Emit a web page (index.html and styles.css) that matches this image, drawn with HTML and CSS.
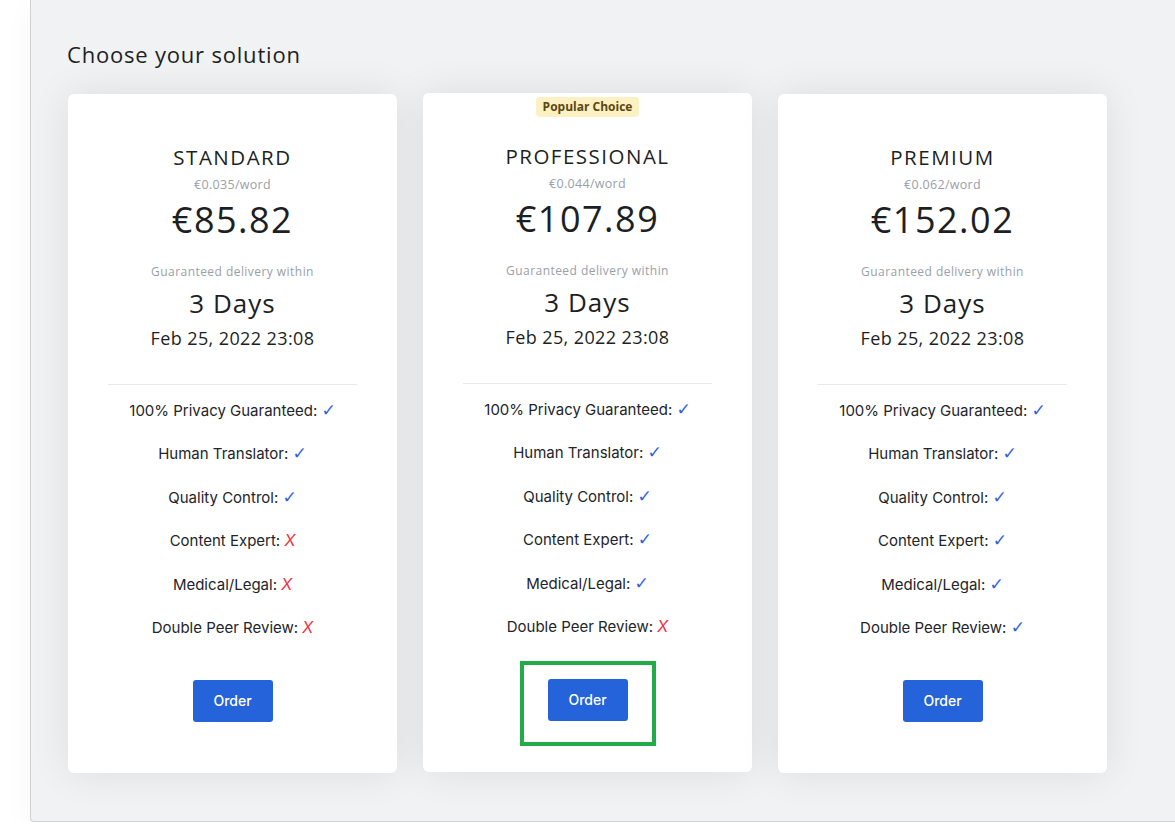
FILE: index.html
```html
<!DOCTYPE html>
<html lang="en">
<head>
    <meta charset="UTF-8">
    <meta name="viewport" content="width=device-width, initial-scale=1.0">
    <title>Choose your solution</title>
    <link rel="stylesheet" href="styles.css">
</head>
<body>
    <div class="panel">
        <h2 class="panel-title">Choose your solution</h2>

        <div class="plans">
            <!-- Standard -->
            <div class="plan">
                <h3 class="plan-name">STANDARD</h3>
                <p class="per-word">€0.035/word</p>
                <p class="price">€85.82</p>
                <p class="delivery-label">Guaranteed delivery within</p>
                <p class="days">3 Days</p>
                <p class="date">Feb 25, 2022 23:08</p>
                <ul class="features">
                    <li>100% Privacy Guaranteed: <span class="yes">✓</span></li>
                    <li>Human Translator: <span class="yes">✓</span></li>
                    <li>Quality Control: <span class="yes">✓</span></li>
                    <li>Content Expert: <span class="no">X</span></li>
                    <li>Medical/Legal: <span class="no">X</span></li>
                    <li>Double Peer Review: <span class="no">X</span></li>
                </ul>
                <button type="button" class="order-btn">Order</button>
            </div>

            <!-- Professional -->
            <div class="plan popular">
                <span class="badge">Popular Choice</span>
                <h3 class="plan-name">PROFESSIONAL</h3>
                <p class="per-word">€0.044/word</p>
                <p class="price">€107.89</p>
                <p class="delivery-label">Guaranteed delivery within</p>
                <p class="days">3 Days</p>
                <p class="date">Feb 25, 2022 23:08</p>
                <ul class="features">
                    <li>100% Privacy Guaranteed: <span class="yes">✓</span></li>
                    <li>Human Translator: <span class="yes">✓</span></li>
                    <li>Quality Control: <span class="yes">✓</span></li>
                    <li>Content Expert: <span class="yes">✓</span></li>
                    <li>Medical/Legal: <span class="yes">✓</span></li>
                    <li>Double Peer Review: <span class="no">X</span></li>
                </ul>
                <button type="button" class="order-btn highlighted">Order</button>
            </div>

            <!-- Premium -->
            <div class="plan">
                <h3 class="plan-name">PREMIUM</h3>
                <p class="per-word">€0.062/word</p>
                <p class="price">€152.02</p>
                <p class="delivery-label">Guaranteed delivery within</p>
                <p class="days">3 Days</p>
                <p class="date">Feb 25, 2022 23:08</p>
                <ul class="features">
                    <li>100% Privacy Guaranteed: <span class="yes">✓</span></li>
                    <li>Human Translator: <span class="yes">✓</span></li>
                    <li>Quality Control: <span class="yes">✓</span></li>
                    <li>Content Expert: <span class="yes">✓</span></li>
                    <li>Medical/Legal: <span class="yes">✓</span></li>
                    <li>Double Peer Review: <span class="yes">✓</span></li>
                </ul>
                <button type="button" class="order-btn">Order</button>
            </div>
        </div>
    </div>
</body>
</html>
```

FILE: styles.css
```css
body {
    margin: 0;
    background: #ffffff;
    font-family: 'Inter', sans-serif;
    color: #1f2328;
}
.panel {
    margin-left: 30px;
    width: 1113px;
    padding: 39px 37px 48px 36px;
    background: #f1f2f4;
    border: 1px solid #cfd1d4;
    border-top: none;
    border-radius: 0 0 4px 4px;
    box-shadow: 0 6px 30px rgba(0, 0, 0, 0.04);
}
.panel-title {
    margin: 0 0 25px;
    font-family: 'Open Sans', sans-serif;
    font-weight: 400;
    font-size: 22px;
    line-height: 30px;
    letter-spacing: 0.8px;
    color: #1d1f23;
}
.plans {
    display: flex;
    gap: 26px;
    padding-left: 1px;
    align-items: flex-start;
}
.plan {
    position: relative;
    width: 329px;
    background: #ffffff;
    border-radius: 6px;
    box-shadow: 0 0 40px rgba(0, 0, 0, 0.09);
    padding: 49px 0 51px;
    text-align: center;
}
.plan.popular {
    margin-top: -1px;
}
.plan p, .plan h3 {
    margin: 0;
}
.badge {
    position: absolute;
    top: 4px;
    left: 50%;
    transform: translateX(-50%);
    padding: 0 7px;
    height: 20px;
    line-height: 20px;
    background: #fdf0c2;
    color: #5a4710;
    border-radius: 4px;
    font-family: 'Open Sans', sans-serif;
    font-size: 12px;
    font-weight: 700;
    white-space: nowrap;
}
.plan-name {
    font-family: 'Open Sans', sans-serif;
    font-weight: 400;
    font-size: 20.5px;
    line-height: 28px;
    letter-spacing: 1.5px;
    color: #1d1f23;
}
.per-word {
    margin-top: 6px !important;
    font-family: 'Open Sans', sans-serif;
    font-size: 12.5px;
    line-height: 16px;
    letter-spacing: 0.3px;
    color: #9aa0a8;
}
.price {
    margin-top: 5px !important;
    font-family: 'Open Sans', sans-serif;
    font-size: 36px;
    line-height: 44px;
    letter-spacing: 1.5px;
    color: #1d1f23;
}
.delivery-label {
    margin-top: 22px !important;
    font-family: 'Open Sans', sans-serif;
    font-size: 12px;
    line-height: 16px;
    letter-spacing: 0.45px;
    color: #9aa0a8;
}
.days {
    margin-top: 6px !important;
    font-family: 'Open Sans', sans-serif;
    font-size: 26px;
    line-height: 34px;
    letter-spacing: 1px;
    color: #1d1f23;
}
.date {
    margin-top: 6px !important;
    font-family: 'Open Sans', sans-serif;
    font-size: 18px;
    line-height: 24px;
    letter-spacing: 0.4px;
    color: #1d1f23;
}
.features {
    list-style: none;
    margin: 34px 40px 0;
    padding: 16px 0 0;
    border-top: 1px solid #e6e8eb;
}
.features li {
    height: 20px;
    font-size: 15px;
    line-height: 20px;
    margin-bottom: 23.4px;
    color: #22252a;
}
.features li:last-child {
    margin-bottom: 0;
}
.yes, .no {
    line-height: 1;
}
.yes {
    color: #2f62e0;
    font-family: 'DejaVu Sans', sans-serif;
    font-size: 17px;
}
.no {
    color: #f2323f;
    font-style: italic;
    font-size: 16px;
}
.order-btn {
    position: relative;
    display: block;
    margin: 42px auto 0;
    width: 80px;
    height: 42px;
    background: #2563da;
    color: #ffffff;
    border: none;
    border-radius: 3px;
    font-family: 'Inter', sans-serif;
    font-weight: 500;
    font-size: 14px;
    cursor: pointer;
}
.order-btn.highlighted::after {
    content: "";
    position: absolute;
    top: -18px;
    left: -28px;
    width: 128px;
    height: 77px;
    border: 4px solid #22ac48;
}
```
